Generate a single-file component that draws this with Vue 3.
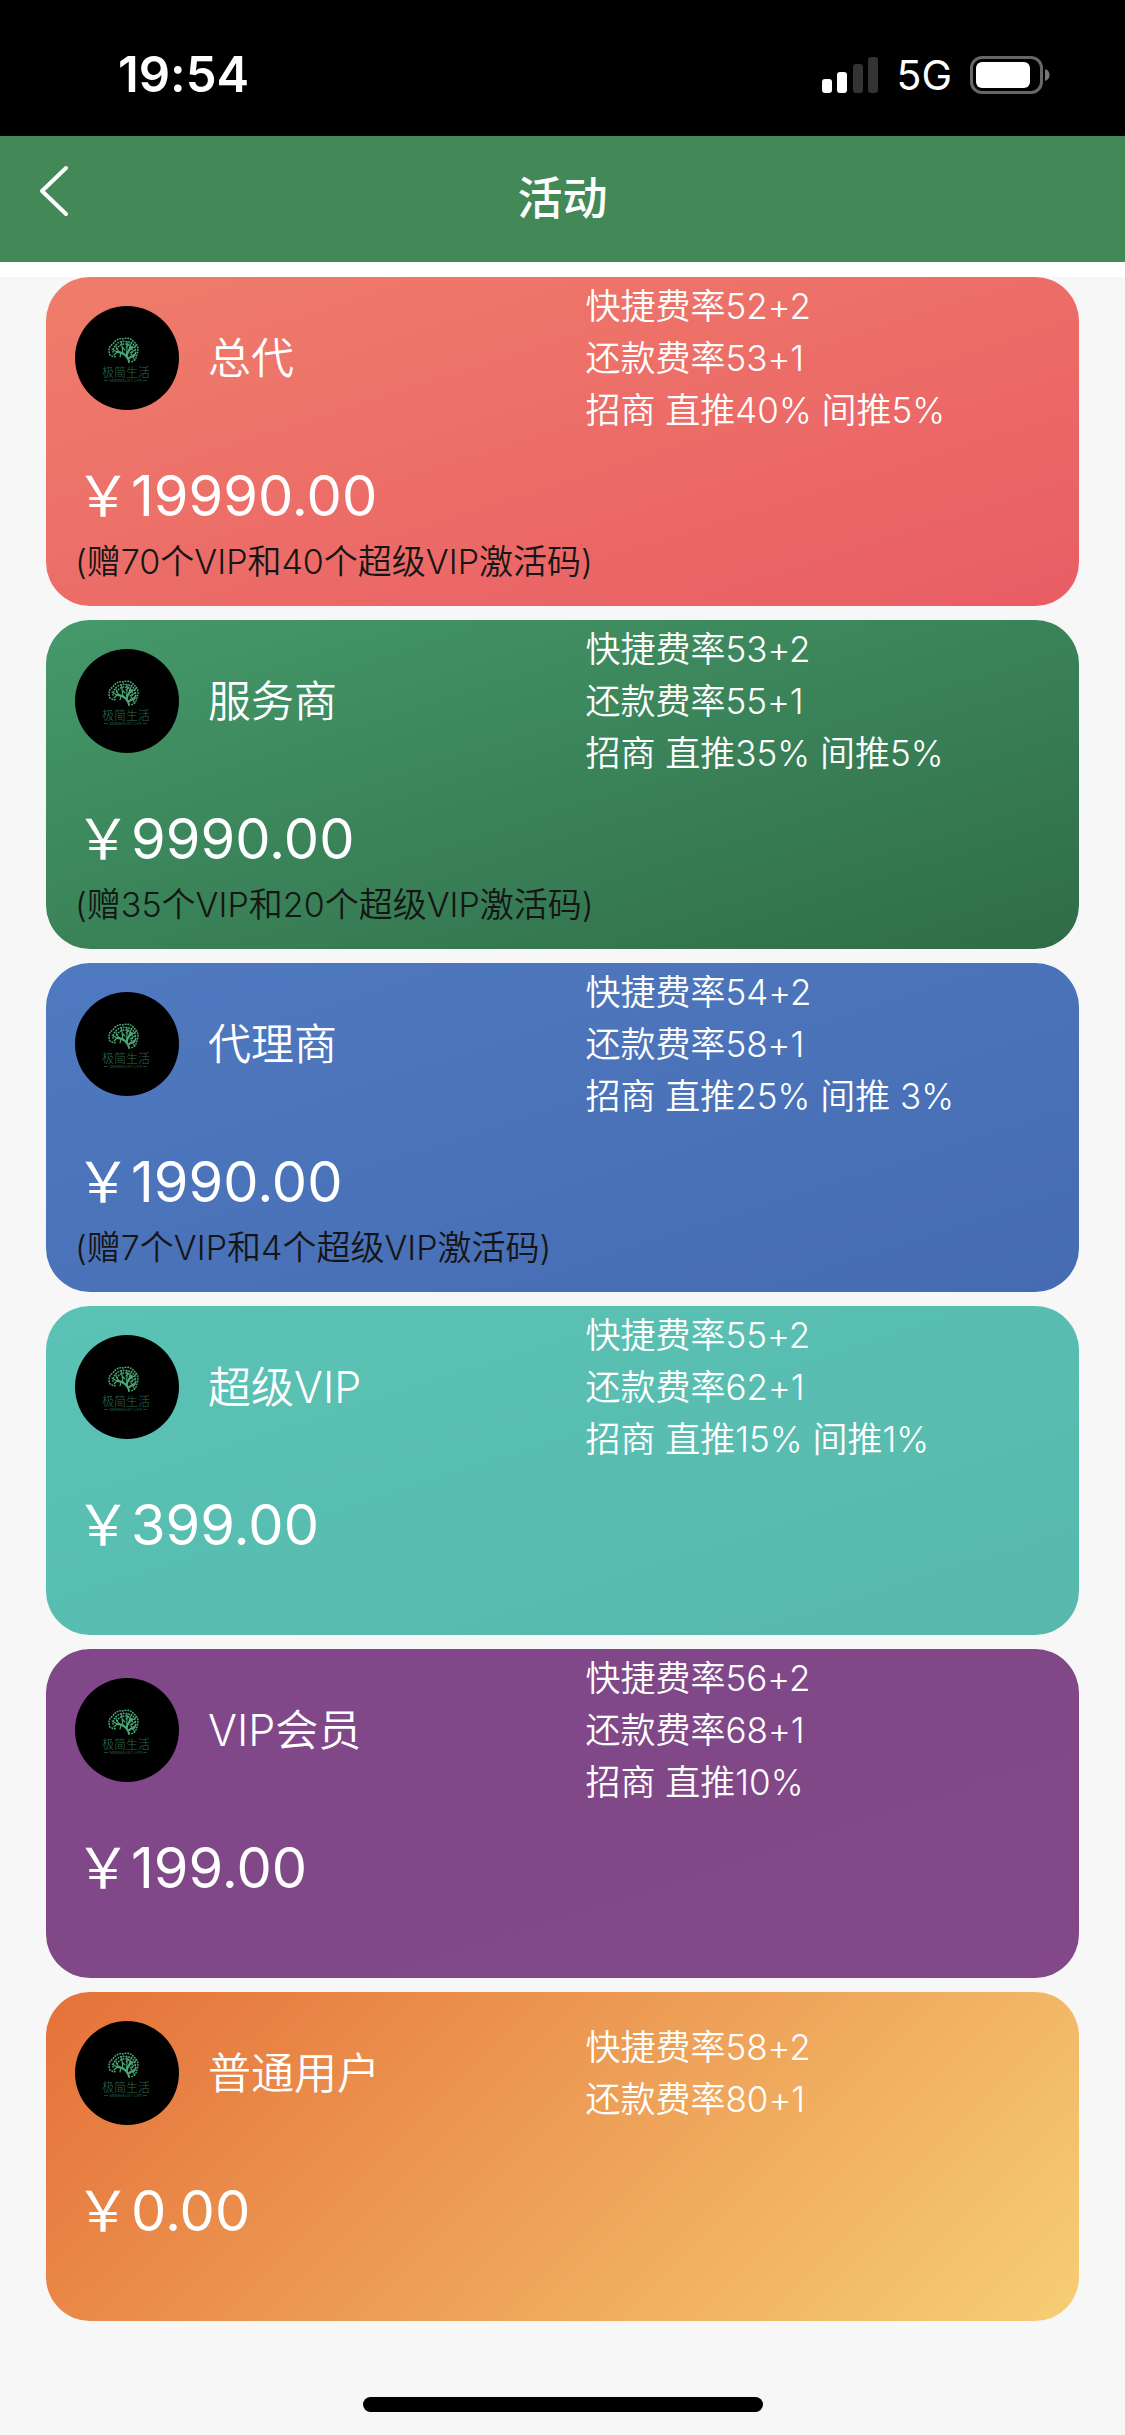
<script setup>
const plans = [
  {
    id: 'general',
    name: '总代',
    price: '19990.00',
    rates: ['快捷费率52+2', '还款费率53+1', '招商 直推40% 间推5%'],
    note: '(赠70个VIP和40个超级VIP激活码)',
  },
  {
    id: 'service',
    name: '服务商',
    price: '9990.00',
    rates: ['快捷费率53+2', '还款费率55+1', '招商 直推35% 间推5%'],
    note: '(赠35个VIP和20个超级VIP激活码)',
  },
  {
    id: 'agent',
    name: '代理商',
    price: '1990.00',
    rates: ['快捷费率54+2', '还款费率58+1', '招商 直推25% 间推 3%'],
    note: '(赠7个VIP和4个超级VIP激活码)',
  },
  {
    id: 'super',
    name: '超级VIP',
    price: '399.00',
    rates: ['快捷费率55+2', '还款费率62+1', '招商 直推15% 间推1%'],
  },
  {
    id: 'vip',
    name: 'VIP会员',
    price: '199.00',
    rates: ['快捷费率56+2', '还款费率68+1', '招商 直推10%'],
  },
  {
    id: 'basic',
    name: '普通用户',
    price: '0.00',
    rates: ['快捷费率58+2', '还款费率80+1'],
  },
]
</script>

<template>
  <div class="page">
    <div class="status">
      <time class="clock">19:54</time>
      <div class="indicators">
        <svg class="signal" width="56" height="36" viewBox="0 0 56 36" aria-hidden="true">
          <rect x="0" y="22" width="10" height="14" rx="3" fill="#fff" />
          <rect x="15" y="15" width="10" height="21" rx="3" fill="#fff" />
          <rect x="31" y="7" width="10" height="29" rx="3" fill="#333" />
          <rect x="46" y="0" width="10" height="36" rx="3" fill="#333" />
        </svg>
        <span class="network">5G</span>
        <svg class="battery" width="80" height="38" viewBox="0 0 80 38" aria-hidden="true">
          <rect x="1.5" y="1.5" width="70" height="35" rx="10.5" fill="none" stroke="#666" stroke-width="3" />
          <rect x="6" y="6" width="54" height="26" rx="6" fill="#fff" />
          <path d="M75 13c3 1 4.500 3 4.500 6s-1.500 5-4.500 6z" fill="#777" />
        </svg>
      </div>
    </div>

    <header class="navbar">
      <button class="back" type="button" aria-label="返回">
        <svg width="32" height="52" viewBox="0 0 32 52" aria-hidden="true">
          <path d="M28 3 4 26l24 23" fill="none" stroke="#fff" stroke-width="4" stroke-linecap="round" stroke-linejoin="round" />
        </svg>
      </button>
      <h1 class="title">活动</h1>
    </header>

    <main class="plans">
      <article v-for="plan in plans" :key="plan.id" class="card" :class="plan.id">
        <div class="summary">
          <svg class="avatar" width="104" height="104" viewBox="0 0 104 104" aria-hidden="true">
            <circle cx="52" cy="52" r="52" fill="#000" />
            <g fill="none" stroke="#4aa876" stroke-linecap="round" stroke-linejoin="round">
              <path stroke-width="2" d="M54 56c0-3-2-5-4-7s-5-3-8-3M52 51c-1-4 2-7 5-10M53 53c2-2 4-3 6-3" />
              <path stroke-width="1.100" d="M46 47c-3-2-5-4-5-7M48 48c-1-4 0-8-2-12M52 49c-1-5 1-9 0-13M54 44c0-3 2-6 3-8M56 42c2 0 4-1 5-3M50 44l-3-3M51 41l3-3M42 46l-5-3M42 46l-3 3M46 47l-1 4M57 50l4-3M57 50l3 4M55 47l5-3" />
              <path stroke-width="1.600" stroke-dasharray="0.500 2.200" d="M35 49c-2-5-1-9 3-11 2-4 6-6 10-5 4-2 9 0 11 3 4 3 5 8 3 12 0 4-3 7-6 8M37 50c1 1 3 1 5 0M38 46c0-4 2-7 5-9 3-2 7-2 10-1 4 0 6 3 7 6s1 6-1 9M42 43c2-4 5-5 8-5s6 2 7 5 0 5-2 7" />
            </g>
            <text class="brand" x="51" y="71" text-anchor="middle">极简生活</text>
            <path d="M29 74.500h4M68 74.500h4" stroke="#17452e" stroke-width="1" />
            <text class="tagline" x="51" y="76" text-anchor="middle">MINIMALIST LIFE</text>
          </svg>
          <h2 class="name">{{ plan.name }}</h2>
          <ul class="rates">
            <li v-for="rate in plan.rates" :key="rate">{{ rate }}</li>
          </ul>
        </div>
        <p class="price">￥{{ plan.price }}</p>
        <p v-if="plan.note" class="note">{{ plan.note }}</p>
      </article>
    </main>

    <div class="home-indicator"></div>
  </div>
</template>

<style>
body {
  margin: 0;
  background: #f7f7f7;
}
</style>

<style scoped>
.page {
  display: flex;
  flex-direction: column;
  min-height: 100vh;
  font-family: Inter, "Noto Sans CJK SC", sans-serif;
  font-feature-settings: "calt" 0;
  background: #f7f7f7;
}

.status {
  display: flex;
  align-items: center;
  justify-content: space-between;
  box-sizing: border-box;
  height: 136px;
  padding: 14px 75px 0 118px;
  color: #fff;
  background: #000;
}

.clock {
  font-size: 49px;
  font-weight: 600;
  line-height: 60px;
}

.indicators {
  display: flex;
  align-items: center;
  gap: 18px;
}

.network {
  font-size: 41px;
  font-weight: 400;
  line-height: 48px;
}

.navbar {
  display: grid;
  grid-template-columns: 1fr auto 1fr;
  align-items: center;
  height: 126px;
  color: #fff;
  background: #438958;
}

.back {
  justify-self: start;
  display: flex;
  padding: 0 38px 16px;
  border: 0;
  background: none;
  cursor: pointer;
}

.title {
  margin: 0;
  font-size: 45px;
  font-weight: 500;
  line-height: 64px;
}

.plans {
  display: flex;
  flex-direction: column;
  gap: 14px;
  padding: 0 46px;
  border-top: 15px solid #fff;
}

.card {
  box-sizing: border-box;
  min-height: 329px;
  padding: 29px 29px 17px;
  border-radius: 44px;
  color: #fff;
}

.general {
  background: linear-gradient(to bottom right, #ef7d6b, #e95d65);
}

.service {
  background: linear-gradient(to bottom right, #45996a, #2f6c48);
}

.agent {
  background: linear-gradient(to bottom right, #4f79c0, #456cb2);
}

.super {
  background: linear-gradient(to bottom right, #5ac3b5, #57b8ac);
}

.vip {
  background: linear-gradient(to bottom right, #804888, #824888);
}

.basic {
  background: linear-gradient(135deg, #e57139, #f6ce75);
}

.summary {
  display: grid;
  grid-template-columns: 104px 7fr 8fr;
  grid-template-rows: 104px;
  align-items: center;
}

.brand {
  font-family: "Liberation Serif", "Noto Sans CJK SC", serif;
  font-size: 12px;
  font-weight: 300;
  fill: #2b6b4a;
}

.tagline {
  font-family: Inter, sans-serif;
  font-size: 4px;
  fill: #246343;
}

.name {
  margin: 0 0 0 29px;
  font-size: 43px;
  font-weight: 350;
  line-height: 60px;
}

.rates {
  margin: 0;
  padding: 0;
  list-style: none;
  font-size: 35px;
  font-weight: 350;
  line-height: 52px;
}

.price {
  margin: 52px 0 0;
  font-size: 56px;
  font-weight: 400;
  line-height: 68px;
}

.note {
  margin: 6px 0 0;
  color: #151515;
  font-size: 34px;
  font-weight: 350;
  line-height: 52px;
}

.home-indicator {
  width: 400px;
  height: 15px;
  margin: auto auto 23px;
  border-radius: 8px;
  background: #000;
}
</style>
